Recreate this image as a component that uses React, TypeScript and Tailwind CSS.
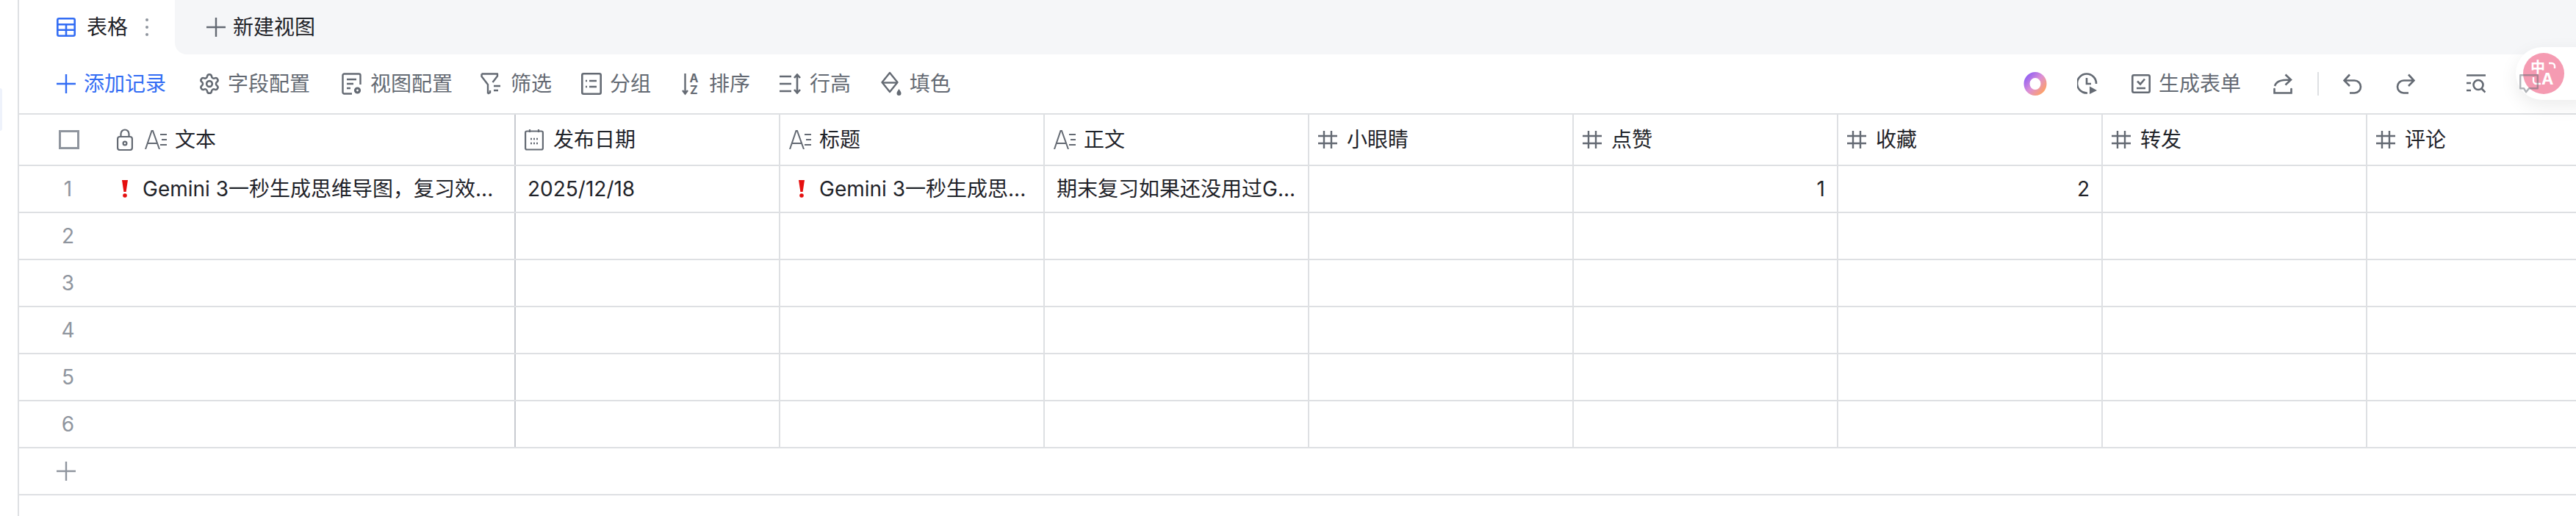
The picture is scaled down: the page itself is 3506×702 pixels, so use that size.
import type { ReactNode } from "react";
import { Settings } from "lucide-react";

const font = "font-['Inter','Noto_Sans_CJK_SC',sans-serif]";

function Plus({ className }: { className?: string }) {
  return (
    <svg width="26" height="26" viewBox="0 0 26 26" fill="none" className={className}>
      <path d="M13 0v26M0 13h26" stroke="currentColor" strokeWidth="2.4" />
    </svg>
  );
}

function TableIcon() {
  return (
    <svg width="26" height="26" viewBox="0 0 26 26" fill="none" stroke="#336df4" strokeWidth="2.6">
      <rect x="1.3" y="1.3" width="23.4" height="23.4" rx="2" />
      <path d="M1.3 9.2h23.4M1.3 16.8h23.4M13 9.2v15.5" />
    </svg>
  );
}

function DocGear() {
  return (
    <svg width="28" height="30" viewBox="0 0 28 30" fill="none" stroke="currentColor" strokeWidth="2.4">
      <path d="M14 28.5H3.5a2 2 0 0 1-2-2v-23a2 2 0 0 1 2-2h20a2 2 0 0 1 2 2V16" />
      <path d="M7 9h13M7 15h9M7 21h5" />
      <circle cx="21.5" cy="24" r="3" strokeWidth="3.2" />
    </svg>
  );
}

function FilterIcon() {
  return (
    <svg width="28" height="30" viewBox="0 0 28 30" fill="none" stroke="currentColor" strokeWidth="2.4">
      <path d="M1.5 1.5h21.5v3L16.5 13M10 28.5l3-1.5v-3M10 28.5V16L1.5 5V1.5" strokeLinejoin="round" />
      <path d="M18 18h9M18 24h6" />
    </svg>
  );
}

function GroupIcon() {
  return (
    <svg width="28" height="30" viewBox="0 0 28 30" fill="none" stroke="currentColor" strokeWidth="2.6">
      <rect x="1.3" y="1.3" width="25.4" height="27.4" rx="2" />
      <path d="M11 11h10M11 19h10M6 11h2M6 19h2" />
    </svg>
  );
}

function SortIcon() {
  return (
    <svg width="26" height="38" viewBox="0 -4 26 38" fill="none">
      <path d="M4.5 1v27M1 24l3.5 4.5L8 24" stroke="currentColor" strokeWidth="2.4" />
      <text x="10.5" y="13" fontSize="16" fontWeight="700" fill="currentColor" fontFamily="Inter">A</text>
      <text x="11" y="29" fontSize="16" fontWeight="700" fill="currentColor" fontFamily="Inter">Z</text>
    </svg>
  );
}

function RowHeightIcon() {
  return (
    <svg width="30" height="28" viewBox="0 0 30 28" fill="none" stroke="currentColor" strokeWidth="2.6">
      <path d="M0 4h16M0 14h16M0 24h16" />
      <path d="M24 2v24M20 6l4-4.5L28 6M20 22l4 4.5 4-4.5" />
    </svg>
  );
}

function FillIcon() {
  return (
    <svg width="28" height="34" viewBox="0 0 28 34" fill="none" stroke="currentColor" strokeWidth="2.4">
      <path d="M12 2 1.5 15 12 28l10.5-13z" strokeLinejoin="round" />
      <path d="M2 15.5h20" />
      <path d="M24.5 24c2 3 3 4.2 3 6a3 3 0 0 1-6 0c0-1.8 1-3 3-6z" fill="currentColor" stroke="none" />
    </svg>
  );
}

function TextFieldIcon() {
  return (
    <svg width="31" height="26" viewBox="0 0 31 26" fill="none" stroke="#646a73" strokeWidth="2">
      <path d="M1 26 9.5 1h1.5L20 26M4.5 18h12" />
      <path d="M21 6h9M23 13h7M21 20h9" />
    </svg>
  );
}

function HashIcon() {
  return (
    <svg width="26" height="26" viewBox="0 0 26 26" fill="none" stroke="#646a73" strokeWidth="2.4">
      <path d="M8 1v24M18 1v24M0 8h26M0 18h26" />
    </svg>
  );
}

function CalendarIcon() {
  return (
    <svg width="26" height="30" viewBox="0 0 26 30" fill="none" stroke="#646a73" strokeWidth="2.2">
      <rect x="1.1" y="3.5" width="23.8" height="25" rx="2" />
      <path d="M7 1v4M19 1v4" />
      <path d="M8 14h2M12 14h2M16 14h2M8 20h2M12 20h2M16 20h2" strokeWidth="2.6" />
    </svg>
  );
}

function LockIcon() {
  return (
    <svg width="22" height="30" viewBox="0 0 22 30" fill="none" stroke="#646a73" strokeWidth="2.2">
      <rect x="1.1" y="11" width="19.8" height="18" rx="3" />
      <path d="M5.5 11V7a5.5 5.5 0 0 1 11 0v4" />
      <circle cx="11" cy="20" r="2.4" />
    </svg>
  );
}

function Exclaim() {
  return (
    <svg width="10" height="24" viewBox="0 0 10 24" fill="#e50f0f">
      <path d="M1 0h8L6.6 16H3.4z" />
      <circle cx="5" cy="21" r="2.8" />
    </svg>
  );
}

function AiLogo() {
  return (
    <svg width="32" height="32" viewBox="0 0 32 32" fill="none">
      <defs>
        <linearGradient id="ring" gradientUnits="userSpaceOnUse" x1="4" y1="4" x2="29" y2="26">
          <stop offset="0" stopColor="#8f5ff5" />
          <stop offset="0.5" stopColor="#dc8fd6" />
          <stop offset="1" stopColor="#ffa263" />
        </linearGradient>
      </defs>
      <ellipse cx="16" cy="16" rx="11.5" ry="12" stroke="url(#ring)" strokeWidth="8" />
    </svg>
  );
}

function HistoryIcon() {
  return (
    <svg width="28" height="30" viewBox="0 0 28 30" fill="none" stroke="currentColor" strokeWidth="2.6">
      <path d="M14 27.5A13 13 0 1 1 26 15" />
      <path d="M13 7v8h6" />
      <path d="M17 18.5 27 24l-10 5z" fill="currentColor" stroke="none" />
    </svg>
  );
}

function FormIcon() {
  return (
    <svg width="26" height="26" viewBox="0 0 26 26" fill="none" stroke="currentColor" strokeWidth="2.6">
      <rect x="1.3" y="1.3" width="23.4" height="23.4" rx="2" />
      <path d="m8 9.5 4 4 6-7M7 19h12" />
    </svg>
  );
}

function ShareIcon() {
  return (
    <svg width="26" height="28" viewBox="0 0 26 28" fill="none" stroke="currentColor" strokeWidth="2.6">
      <path d="M2 17C4 11 9 8.5 23 8.5M16.5 1.5l7.5 7-7.5 7" />
      <path d="M1.5 21v5.5h23V21" strokeLinecap="round" />
    </svg>
  );
}

function UndoIcon({ flip }: { flip?: boolean }) {
  return (
    <svg width="26" height="28" viewBox="0 0 26 28" fill="none" stroke="currentColor" strokeWidth="2.6" className={flip ? "-scale-x-100" : ""}>
      <path d="M9 1.5 1.5 9.5 9 17M2 9.5h13.5a8.5 8.5 0 0 1 0 17H9" />
    </svg>
  );
}

function SearchListIcon() {
  return (
    <svg width="26" height="26" viewBox="0 0 26 26" fill="none" stroke="currentColor" strokeWidth="2.6">
      <path d="M0 1.5h26M0 12h6M0 22h6" />
      <circle cx="16" cy="14.5" r="6.5" />
      <path d="m20.5 19.5 5 5" />
    </svg>
  );
}

function CommentIcon() {
  return (
    <svg width="26" height="26" viewBox="0 0 26 26" fill="none" stroke="currentColor" strokeWidth="2.4">
      <path d="M1.2 1.2h23.6v18H13l-4 5-3-5H1.2z" strokeLinejoin="round" />
    </svg>
  );
}

const tools: { icon: ReactNode; label: string; className: string }[] = [
  { icon: <Settings size={28} strokeWidth={2} className="scale-110" />, label: "字段配置", className: "mr-[43px]" },
  { icon: <DocGear />, label: "视图配置", className: "mr-[38px]" },
  { icon: <FilterIcon />, label: "筛选", className: "mr-[40px] gap-[13px]" },
  { icon: <GroupIcon />, label: "分组", className: "mr-[42px]" },
  { icon: <SortIcon />, label: "排序", className: "mr-[40px]" },
  { icon: <RowHeightIcon />, label: "行高", className: "mr-[41px]" },
  { icon: <FillIcon />, label: "填色", className: "" },
];

const columns: { icon: ReactNode; label: string; gap: string; value?: string; align?: boolean }[] = [
  { icon: <CalendarIcon />, label: "发布日期", gap: "gap-[13px]", value: "2025/12/18" },
  { icon: <TextFieldIcon />, label: "标题", gap: "gap-[10px]", value: "Gemini 3一秒生成思..." },
  { icon: <TextFieldIcon />, label: "正文", gap: "gap-[10px]", value: "期末复习如果还没用过G..." },
  { icon: <HashIcon />, label: "小眼睛", gap: "gap-[13px]" },
  { icon: <HashIcon />, label: "点赞", gap: "gap-[13px]", value: "1", align: true },
  { icon: <HashIcon />, label: "收藏", gap: "gap-[13px]", value: "2", align: true },
  { icon: <HashIcon />, label: "转发", gap: "gap-[13px]" },
  { icon: <HashIcon />, label: "评论", gap: "gap-[13px]" },
];

const rows = [1, 2, 3, 4, 5, 6];
const line = "border-[#dee0e3]";

export default function App() {
  return (
    <div className={`relative h-[702px] w-[3506px] overflow-hidden bg-white text-[28px] text-[#1f2329] ${font}`}>
      <div className="ml-[24px] h-full border-l-2 border-[#dee0e3]">
        {/* tabs */}
        <div className="flex h-[74px]">
          <div className="flex w-[212px] shrink-0 items-center pl-[51px]">
            <TableIcon />
            <span className="ml-[15px]">表格</span>
            <span className="ml-[24px] flex flex-col gap-[6px]">
              <i className="size-[4px] rounded-full bg-[#8f959e]" />
              <i className="size-[4px] rounded-full bg-[#8f959e]" />
              <i className="size-[4px] rounded-full bg-[#8f959e]" />
            </span>
          </div>
          <div className="flex flex-1 items-center rounded-bl-[16px] bg-[#f5f6f8] pl-[43px]">
            <Plus className="text-[#646a73]" />
            <span className="ml-[10px]">新建视图</span>
          </div>
        </div>

        {/* toolbar */}
        <div className="flex h-[80px] items-center justify-between pl-[51px] pr-[51px] text-[#646a73]">
          <div className="flex items-center">
            <div className="mr-[45px] flex items-center gap-[11px] text-[#336df4]">
              <Plus />
              <span>添加记录</span>
            </div>
            {tools.map((tool) => (
              <div key={tool.label} className={`flex items-center gap-[11px] ${tool.className}`}>
                {tool.icon}
                <span>{tool.label}</span>
              </div>
            ))}
          </div>
          <div className="flex items-center">
            <AiLogo />
            <div className="ml-[41px]"><HistoryIcon /></div>
            <div className="ml-[46px] flex items-center gap-[11px]">
              <FormIcon />
              <span>生成表单</span>
            </div>
            <div className="ml-[44px]"><ShareIcon /></div>
            <div className="ml-[34px] h-[32px] w-[2px] bg-[#dee0e3]" />
            <div className="ml-[33px]"><UndoIcon /></div>
            <div className="ml-[46px]"><UndoIcon flip /></div>
            <div className="ml-[70px]"><SearchListIcon /></div>
            <div className="relative z-10 ml-[46px] opacity-50"><CommentIcon /></div>
          </div>
        </div>

        {/* table */}
        <div className={`flex h-[72px] border-y-2 ${line}`}>
          <div className="flex w-[676px] shrink-0 items-center border-r-2 border-[#c8cad0]">
            <div className="flex w-[133px] shrink-0 justify-center pl-[3px]">
              <div className="h-[26px] w-[28px] border-[3px] border-[#8f959e]" />
            </div>
            <LockIcon />
            <div className="ml-[16px]"><TextFieldIcon /></div>
            <span className="ml-[10px]">文本</span>
          </div>
          {columns.map((col) => (
            <div key={col.label} className={`flex w-[360px] shrink-0 items-center border-r-2 pl-[12px] ${col.gap} ${line}`}>
              {col.icon}
              <span>{col.label}</span>
            </div>
          ))}
        </div>
        {rows.map((row) => (
          <div key={row} className={`flex h-[64px] border-b-2 ${line}`}>
            <div className="flex w-[676px] shrink-0 items-center border-r-2 border-[#c8cad0]">
              <div className="w-[133px] shrink-0 text-center text-[#8f959e]">{row}</div>
              {row === 1 && (
                <>
                  <div className="ml-[6px]"><Exclaim /></div>
                  <span className="ml-[19px] whitespace-nowrap">Gemini 3一秒生成思维导图，复习效...</span>
                </>
              )}
            </div>
            {columns.map((col) => (
              <div
                key={col.label}
                className={`flex w-[360px] shrink-0 items-center border-r-2 px-[16px] whitespace-nowrap ${line} ${col.align ? "justify-end" : ""}`}
              >
                {row === 1 && col.label === "标题" && (
                  <span className="mr-[19px] ml-[8px]"><Exclaim /></span>
                )}
                {row === 1 && col.value !== undefined && <span>{col.value}</span>}
              </div>
            ))}
          </div>
        ))}
        <div className={`flex h-[64px] items-center border-b-2 pl-[51px] text-[#8f959e] ${line}`}>
          <Plus />
        </div>
      </div>

      {/* translate widget floating over the toolbar */}
      <div className="absolute left-[3424px] top-[64px] flex h-[72px] w-[100px] items-center rounded-l-[36px] bg-white pl-[10px] shadow-[0_8px_24px_rgba(0,0,0,0.08)]">
        <div className="relative size-[56px] rounded-full bg-[#f59bb2] text-white">
          <span className="absolute left-[10px] top-[9px] text-[20px] leading-[22px] font-bold">中</span>
          <span className="absolute left-[25px] top-[22px] text-[22px] leading-[26px] font-bold">A</span>
          <svg width="56" height="56" viewBox="0 0 56 56" fill="none" stroke="white" strokeWidth="2.4" className="absolute inset-0">
            <path d="M35 14h4a4 4 0 0 1 4 4v3M14 33v5a4 4 0 0 0 4 4h6" />
          </svg>
        </div>
      </div>
      <div className="absolute left-0 top-[120px] h-[58px] w-[3px] rounded-r-[3px] bg-[#eef2fb]" />
    </div>
  );
}
